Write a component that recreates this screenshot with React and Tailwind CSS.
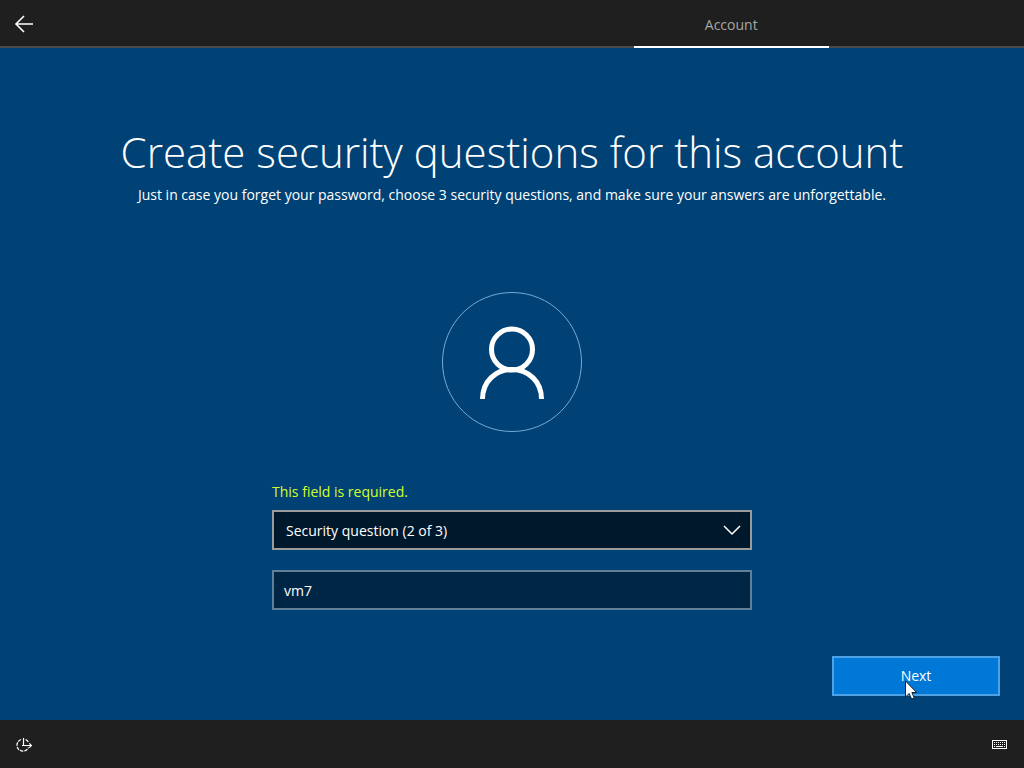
const tabs = ['', '', '', 'Account', ''];

function Header() {
  return (
    <header className="flex h-12 shrink-0 bg-[#1f1f1f]">
      <button
        type="button"
        aria-label="Back"
        className="flex w-12 items-center justify-center border-b-2 border-[#4a4a4a]"
      >
        <svg className="h-5 w-5" viewBox="0 0 20 20" fill="none" stroke="#fff" strokeWidth="1.6">
          <path d="M19 11H2M10 3L2 11L10 19" />
        </svg>
      </button>
      <nav className="flex flex-1">
        {tabs.map((tab, index) => (
          <div
            key={index}
            className={
              tab
                ? 'flex flex-1 items-center justify-center border-b-2 border-white pt-1 text-[#a6a6a6]'
                : 'flex-1 border-b-2 border-[#4a4a4a]'
            }
          >
            {tab}
          </div>
        ))}
      </nav>
    </header>
  );
}

function Avatar() {
  return (
    <svg className="h-[140px] w-[140px]" viewBox="0 0 140 140" fill="none">
      <circle cx="70" cy="70" r="69.5" stroke="#76a9d6" />
      <circle cx="70" cy="57.5" r="20.5" stroke="#fff" strokeWidth="5" />
      <path d="M40.500 107C40.500 90 53 77.500 70 77.500S99.500 90 99.500 107" stroke="#fff" strokeWidth="5" />
    </svg>
  );
}

function SecurityForm() {
  return (
    <form className="flex w-full max-w-[480px] flex-col">
      <label htmlFor="question" className="leading-5 text-[#d4ff2a]">
        This field is required.
      </label>
      <div className="relative mt-2">
        <select
          id="question"
          className="h-10 w-full appearance-none border-2 border-[#999c9a] bg-[#00182b] px-3 pt-px text-white"
        >
          <option>Security question (2 of 3)</option>
        </select>
        <svg
          className="pointer-events-none absolute top-3 right-2 h-4 w-6"
          viewBox="0 0 24 16"
          fill="none"
          stroke="#fff"
          strokeWidth="1.5"
        >
          <path d="M4 4L12 12L20 4" />
        </svg>
      </div>
      <input
        type="text"
        aria-label="Your answer"
        defaultValue="vm7"
        className="mt-5 h-10 w-full border-2 border-[#607f98] bg-[#002646] px-[10px] text-white"
      />
    </form>
  );
}

function Cursor() {
  return (
    <svg
      className="pointer-events-none absolute top-[22px] left-[71px] h-5 w-3"
      viewBox="0 0 12 20"
      fill="#fff"
      stroke="#10202e"
    >
      <path d="M0.500 1V17L4.200 13.500L6.600 19L9.200 17.900L6.900 12.500H11.700Z" />
    </svg>
  );
}

function Footer() {
  return (
    <footer className="flex h-12 shrink-0 items-center justify-between bg-[#1f1f1f] px-4">
      <button type="button" aria-label="Ease of Access">
        <svg className="h-4 w-4" viewBox="0 0 16 16" fill="none" stroke="#fff" strokeWidth="1.2">
          <path d="M5 3.500A6 6 0 1 0 12.500 11.500" strokeDasharray="3.500 1" />
          <path d="M9.500 3.500A6 6 0 0 1 12.300 6" />
          <path d="M7.500 2V9.500M6 9.500H15.500M13.300 7.300L15.500 9.500L13.300 11.700" />
        </svg>
      </button>
      <button type="button" aria-label="On-screen keyboard">
        <svg className="h-4 w-4" viewBox="0 0 16 16" fill="none" stroke="#fff">
          <rect x="0.500" y="4.500" width="14" height="8" />
          <path d="M2 6.500H14M2 8.500H14" strokeDasharray="1 1" />
          <path d="M2 10.500H3M4 10.500H11M12 10.500H13" />
        </svg>
      </button>
    </footer>
  );
}

export default function App() {
  return (
    <div className="flex min-h-screen flex-col bg-[#004275] font-['Open_Sans',sans-serif] text-sm text-white">
      <Header />
      <main className="flex flex-1 flex-col items-center px-6 pb-6">
        <h1 className="mt-[72px] text-center text-[42px] leading-[64px] font-light">
          Create security questions for this account
        </h1>
        <p className="text-center leading-[22px]">
          Just in case you forget your password, choose 3 security questions, and make sure your answers are
          unforgettable.
        </p>
        <div className="mt-[86px] mb-[50px]">
          <Avatar />
        </div>
        <SecurityForm />
        <div className="mt-auto self-end">
          <button
            type="button"
            className="relative h-10 w-[168px] border-2 border-[#4da1e4] bg-[#0078d7]"
          >
            Next
            <Cursor />
          </button>
        </div>
      </main>
      <Footer />
    </div>
  );
}
